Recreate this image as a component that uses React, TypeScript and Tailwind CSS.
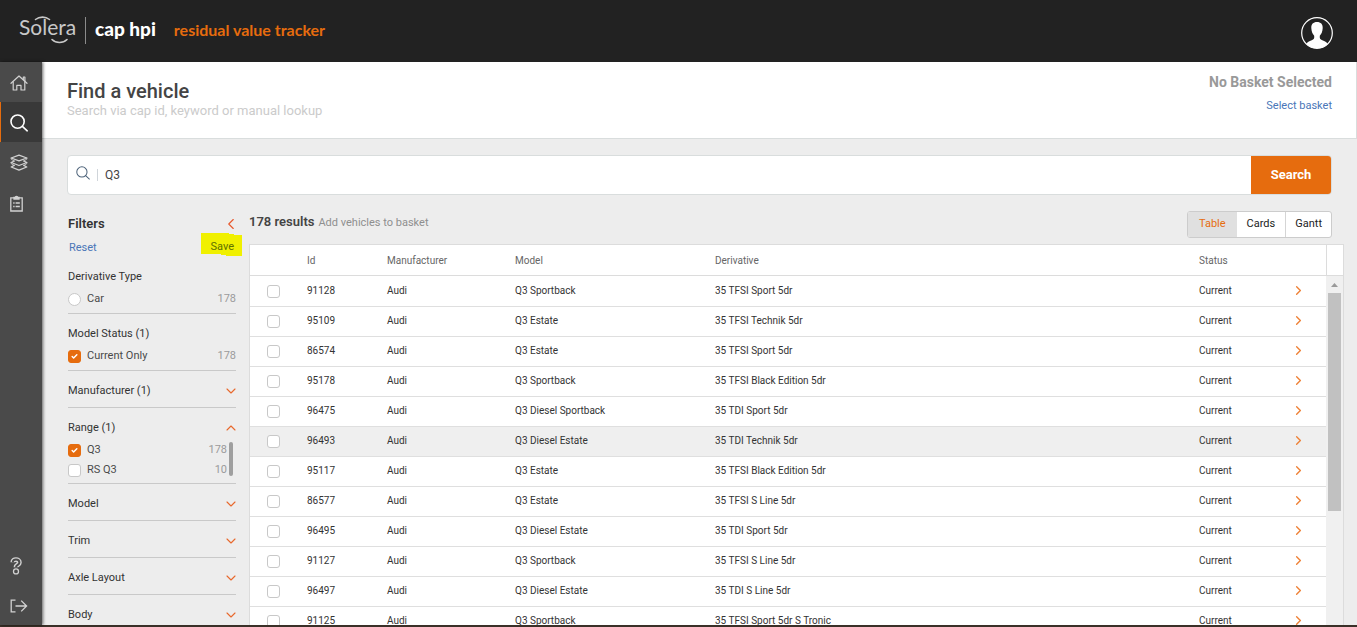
import React from 'react';
import { Check, ChevronDown, ChevronLeft, ChevronRight, ChevronUp } from 'lucide-react';

type Vehicle = { id: string; model: string; derivative: string; highlighted?: boolean };

const vehicles: Vehicle[] = [
  { id: '91128', model: 'Q3 Sportback', derivative: '35 TFSI Sport 5dr' },
  { id: '95109', model: 'Q3 Estate', derivative: '35 TFSI Technik 5dr' },
  { id: '86574', model: 'Q3 Estate', derivative: '35 TFSI Sport 5dr' },
  { id: '95178', model: 'Q3 Sportback', derivative: '35 TFSI Black Edition 5dr' },
  { id: '96475', model: 'Q3 Diesel Sportback', derivative: '35 TDI Sport 5dr' },
  { id: '96493', model: 'Q3 Diesel Estate', derivative: '35 TDI Technik 5dr', highlighted: true },
  { id: '95117', model: 'Q3 Estate', derivative: '35 TFSI Black Edition 5dr' },
  { id: '86577', model: 'Q3 Estate', derivative: '35 TFSI S Line 5dr' },
  { id: '96495', model: 'Q3 Diesel Estate', derivative: '35 TDI Sport 5dr' },
  { id: '91127', model: 'Q3 Sportback', derivative: '35 TFSI S Line 5dr' },
  { id: '96497', model: 'Q3 Diesel Estate', derivative: '35 TDI S Line 5dr' },
  { id: '91125', model: 'Q3 Sportback', derivative: '35 TFSI Sport 5dr S Tronic' },
];

function HomeIcon() {
  return (
    <svg width="18" height="16" viewBox="0 0 18 16" fill="none" stroke="currentColor" strokeWidth="1.2" strokeLinejoin="round" strokeLinecap="round" aria-hidden="true">
      <path d="M1 8.3 9 1l8 7.3" />
      <path d="M13.3 4.5V2h1.6v4" />
      <path d="M3.2 6.8V15h3.6v-4.6h4.2V15h3.8V6.8" />
    </svg>
  );
}

function SearchIcon({ size, strokeWidth }: { size: number; strokeWidth: number }) {
  return (
    <svg width={size} height={size} viewBox="0 0 18 18" fill="none" stroke="currentColor" strokeWidth={strokeWidth} strokeLinecap="round" aria-hidden="true">
      <circle cx="7.6" cy="7.6" r="6.6" />
      <path d="m12.4 12.4 4.8 4.4" />
    </svg>
  );
}

function LayersIcon() {
  return (
    <svg width="18" height="18" viewBox="0 0 18 18" fill="none" stroke="currentColor" strokeWidth="1.3" strokeLinejoin="round" strokeLinecap="round" aria-hidden="true">
      <path d="M9 1.2 16.8 4 9 6.800 1.200 4z" />
      <path d="M4.200 7 1.200 8.500 9 11.500l7.800-3L13.800 7" />
      <path d="M4.200 11.400 1.200 13 9 16.200 16.800 13l-3-1.600" />
      <path d="M1.200 4v1.200L4.200 7M16.800 4v1.200L13.800 7" strokeWidth="0.800" />
      <path d="M1.200 8.500v1.200l3 1.700M16.800 8.500v1.200l-3 1.700" strokeWidth="0.800" />
    </svg>
  );
}

function ClipboardIcon() {
  return (
    <svg width="13" height="17" viewBox="0 0 13 17" fill="none" stroke="currentColor" strokeWidth="1.3" aria-hidden="true">
      <path d="M.8 2.800h11.400V16H.8z" />
      <path d="M4 4V2.500h1.300a1.200 1.200 0 0 1 2.400 0H9V4z" fill="currentColor" />
      <path d="M3.200 8h1.400M5.600 8h4.200M3.200 11.500h1.400M5.600 11.500h4.200" />
    </svg>
  );
}

function HelpIcon() {
  const hook = 'M2.800 5.200C2.800 3.200 4.200 2.600 6 2.600s3.400.9 3.400 2.900c0 2.400-3.400 2.200-3.400 4.700';
  return (
    <svg width="12" height="18" viewBox="0 0 12 18" fill="none" strokeLinejoin="round" aria-hidden="true">
      <path d={hook} stroke="#d2d2d2" strokeWidth="4.800" />
      <circle cx="6" cy="14.400" r="2.500" fill="#4a4a4a" stroke="#d2d2d2" strokeWidth="1.300" />
      <path d={hook} stroke="#4a4a4a" strokeWidth="2" />
    </svg>
  );
}

function LogoutIcon() {
  return (
    <svg width="18" height="14" viewBox="0 0 18 14" fill="none" stroke="currentColor" strokeWidth="1.3" aria-hidden="true">
      <path d="M5.5 1.2H1.2v11.6h4.3" />
      <path d="M5.5 7h11M11.2 1.6 16.6 7l-5.4 5.4" />
    </svg>
  );
}

function NavButton({ label, active = false, children }: { label: string; active?: boolean; children: React.ReactNode }) {
  return (
    <button
      type="button"
      aria-label={label}
      className={`flex h-10 w-full items-center pt-0.5 pl-2.5 ${active ? 'bg-[#393939] text-white shadow-[inset_1px_0_0_#e66c0e]' : 'text-[#d2d2d2]'}`}
    >
      {children}
    </button>
  );
}

function TickBox({ id, label, type = 'checkbox', checked = false }: { id: string; label?: string; type?: 'checkbox' | 'radio'; checked?: boolean }) {
  return (
    <span className="grid size-[13px] shrink-0 place-items-center">
      <input
        id={id}
        type={type}
        aria-label={label}
        defaultChecked={checked}
        className={`col-start-1 row-start-1 size-[13px] appearance-none border border-[#c8c8c8] bg-white checked:border-[#e66c0e] checked:bg-[#e66c0e] ${type === 'radio' ? 'rounded-full' : 'rounded-[3px]'}`}
      />
      {checked && <Check size={7} strokeWidth={5} className="pointer-events-none col-start-1 row-start-1 text-white" />}
    </span>
  );
}

function Option({ id, label, count, type, checked, height = 'h-[22px]' }: { id: string; label: string; count: number; type?: 'checkbox' | 'radio'; checked?: boolean; height?: string }) {
  return (
    <div className={`flex ${height} items-center text-[11px]`}>
      <TickBox id={id} type={type} checked={checked} />
      <label htmlFor={id} className="ml-1.5 flex-1 pt-px text-[#4a4a4a]">{label}</label>
      <span className="pt-px text-[#9b9b9b]">{count}</span>
    </div>
  );
}

function Section({ title, toggle, children }: { title: string; toggle?: 'open' | 'closed'; children?: React.ReactNode }) {
  const heading = 'flex h-[22px] w-full items-center justify-between text-[11px] text-[#333]';
  return (
    <section className={`border-b border-[#c9c9c9] pt-[9px] ${children ? 'pb-[3px]' : 'pb-[5px]'}`}>
      {toggle ? (
        <button type="button" aria-expanded={toggle === 'open'} className={heading}>
          {title}
          {toggle === 'open' ? (
            <ChevronUp size={16} strokeWidth={1.7} className="-mr-[3px] text-[#e8682c]" />
          ) : (
            <ChevronDown size={16} strokeWidth={1.7} className="-mr-[3px] text-[#e8682c]" />
          )}
        </button>
      ) : (
        <h3 className={heading}>{title}</h3>
      )}
      {children}
    </section>
  );
}

function Header() {
  return (
    <header className="flex h-[62px] shrink-0 items-center justify-between bg-[#222] pr-6 pl-[19px]">
      <div className="flex items-center pb-0.5">
        <div className="relative h-7 w-[57px] font-['Lato'] text-[21px] leading-[22px] font-normal text-[#c8c8c8]">
          Solera
          <svg className="absolute top-0 left-0" width="58" height="30" viewBox="0 0 58 30" fill="none" stroke="#c8c8c8" strokeWidth="1.6" strokeLinecap="round" aria-hidden="true">
            <path d="M16.500 3.500c4-3.200 10-3.200 14 0" />
            <path d="M33 23.500c4 4 11 4 15 0" />
          </svg>
        </div>
        <span className="ml-[9px] h-[27px] w-px bg-[#8b8b8b]" />
        <span className="ml-[9px] pb-0.5 font-['Lato'] text-[19px] leading-6 font-black text-white">cap hpi</span>
        <span className="ml-[18px] font-['Lato'] text-[16px] leading-6 font-bold text-[#e66c0e]">residual value tracker</span>
      </div>
      <button type="button" aria-label="Account" className="mt-1">
        <svg width="32" height="32" viewBox="0 0 32 32" aria-hidden="true">
          <circle cx="16" cy="16" r="15.3" fill="#222" stroke="#fff" strokeWidth="1.2" />
          <path d="M16 5c3.800 0 5.900 2.300 5.700 6-.2 3.800-1.300 6-2.900 7.700-.3 2.600.3 3.600 2.500 4.600 2.600 1.100 4.300 1.900 5.600 3.600A15.300 15.300 0 0 1 16 31.300 15.300 15.300 0 0 1 5.100 26.900c1.300-1.700 3-2.500 5.600-3.600 2.200-1 2.800-2 2.500-4.600-1.600-1.700-2.700-3.900-2.900-7.700C10.100 7.300 12.200 5 16 5z" fill="#fff" />
        </svg>
      </button>
    </header>
  );
}

function Filters() {
  return (
    <aside className="w-[168px] shrink-0">
      <div className="flex h-[26px] items-center justify-between">
        <h2 className="text-[13px] font-semibold text-[#333]">Filters</h2>
        <button type="button" aria-label="Collapse filters">
          <ChevronLeft size={18} strokeWidth={1.5} className="-mr-1 text-[#e8582c]" />
        </button>
      </div>
      <div className="flex h-5 items-center justify-between text-[11px]">
        <a href="#reset" className="ml-px pt-0.5 text-[#4a76b8]">Reset</a>
        <a href="#save" className="relative mr-0.5 text-[#5f7000]">
          <svg className="absolute -top-1.5 -left-[9px]" width="41" height="24" viewBox="0 0 41 24" aria-hidden="true">
            <path d="M0 0h28v1h5v1h8v21H25v-1h-5v-1H0z" fill="#f0f000" />
          </svg>
          <span className="relative">Save</span>
        </a>
      </div>
      <Section title="Derivative Type">
        <Option id="type-car" type="radio" label="Car" count={178} />
      </Section>
      <Section title="Model Status (1)">
        <Option id="status-current" label="Current Only" count={178} checked />
      </Section>
      <Section title="Manufacturer (1)" toggle="closed" />
      <Section title="Range (1)" toggle="open">
        <div className="flex gap-0.5 pt-px pr-[3px]">
          <div className="flex-1">
            <Option id="range-q3" label="Q3" count={178} checked height="h-5" />
            <Option id="range-rsq3" label="RS Q3" count={10} height="h-5" />
          </div>
          <div className="mt-0.5 h-[34px] w-1 rounded-full bg-[#9f9f9f]" />
        </div>
      </Section>
      <Section title="Model" toggle="closed" />
      <Section title="Trim" toggle="closed" />
      <Section title="Axle Layout" toggle="closed" />
      <Section title="Body" toggle="closed" />
    </aside>
  );
}

function Results() {
  return (
    <section className="flex min-w-0 flex-1 flex-col">
      <div className="flex h-[33px] shrink-0 items-start justify-between pr-3">
        <p className="mt-px flex items-baseline gap-1 leading-5">
          <strong className="text-[13px] font-semibold text-[#444]">178 results</strong>
          <span className="text-[11px] text-[#8f8f8f]">Add vehicles to basket</span>
        </p>
        <div className="flex h-[27px] overflow-hidden rounded-[3px] border border-[#ccc] bg-white text-[11px] text-[#222]">
          <button type="button" className="bg-[#e0e0e0] px-[11px] text-[#e66c0e]">Table</button>
          <button type="button" className="px-2.5">Cards</button>
          <button type="button" className="border-l border-[#d5d5d5] px-[9px]">Gantt</button>
        </div>
      </div>
      <div className="flex min-h-0 flex-1 overflow-hidden border-x border-t border-[#dcdcdc] bg-white">
        <div className="min-w-0 flex-1">
          <table className="w-full table-fixed border-separate border-spacing-0 text-left text-[10px]">
            <colgroup>
              <col className="w-[57px]" />
              <col className="w-20" />
              <col className="w-32" />
              <col className="w-[200px]" />
              <col />
              <col className="w-24" />
              <col className="w-[31px]" />
            </colgroup>
            <thead>
              <tr className="h-[31px] text-[#666] *:border-b *:border-[#dcdcdc]">
                <td />
                <th className="font-normal">Id</th>
                <th className="font-normal">Manufacturer</th>
                <th className="font-normal">Model</th>
                <th className="font-normal">Derivative</th>
                <th className="font-normal">Status</th>
                <td />
              </tr>
            </thead>
            <tbody className="text-[#333]">
              {vehicles.map((v) => (
                <tr key={v.id} className={`h-[30px] *:border-b *:border-[#dfdfdf] first:h-[31px] ${v.highlighted ? 'bg-[#efefef]' : ''}`}>
                  <td className="pl-[17px]">
                    <TickBox id={`vehicle-${v.id}`} label={`Select vehicle ${v.id}`} />
                  </td>
                  <td className="pb-0.5">{v.id}</td>
                  <td className="pb-0.5">Audi</td>
                  <td className="pb-0.5">{v.model}</td>
                  <td className="pb-0.5">{v.derivative}</td>
                  <td className="pb-0.5">Current</td>
                  <td className="pb-0.5">
                    <button type="button" aria-label={`Open vehicle ${v.id}`} className="-ml-1 block">
                      <ChevronRight size={15} strokeWidth={2.2} className="text-[#ee8136]" />
                    </button>
                  </td>
                </tr>
              ))}
            </tbody>
          </table>
        </div>
        <div className="flex w-[17px] shrink-0 flex-col">
          <div className="h-[31px] shrink-0 border-b border-l border-[#dcdcdc]" />
          <div className="flex flex-1 flex-col items-center bg-[#f0f0f0]">
            <svg className="mt-[7px] mb-1.5 shrink-0" width="7" height="4" viewBox="0 0 7 4" aria-hidden="true">
              <path d="M0 4 3.500 0 7 4z" fill="#9a9a9a" />
            </svg>
            <div className="h-[218px] w-[13px] bg-[#c1c1c1]" />
          </div>
        </div>
      </div>
    </section>
  );
}

export default function App() {
  return (
    <div className="flex h-screen flex-col overflow-hidden bg-[#ededed] font-['Roboto',sans-serif]">
      <Header />
      <div className="flex min-h-0 flex-1">
        <nav className="z-10 flex w-[42px] shrink-0 flex-col justify-between bg-[#4a4a4a] shadow-[1px_0_3px_rgba(0,0,0,0.6)]">
          <div>
            <NavButton label="Home"><HomeIcon /></NavButton>
            <NavButton label="Search" active><SearchIcon size={18} strokeWidth={1.6} /></NavButton>
            <NavButton label="Baskets"><LayersIcon /></NavButton>
            <NavButton label="Reports"><ClipboardIcon /></NavButton>
          </div>
          <div>
            <NavButton label="Help"><HelpIcon /></NavButton>
            <NavButton label="Log out"><LogoutIcon /></NavButton>
          </div>
        </nav>
        <main className="flex min-w-0 flex-1 flex-col">
          <div className="flex h-[77px] shrink-0 justify-between border-r border-b border-[#d9dddd] bg-white pt-[18px] pr-6 pl-[25px]">
            <div>
              <h1 className="text-[20px] leading-[22px] font-medium text-[#444]">Find a vehicle</h1>
              <p className="text-[13px] leading-[18px] text-[#cbcbcb]">Search via cap id, keyword or manual lookup</p>
            </div>
            <div className="-mt-2 text-right">
              <p className="text-[14px] leading-5 font-bold text-[#999]">No Basket Selected</p>
              <a href="#basket" className="text-[11px] leading-5 text-[#4a76b8]">Select basket</a>
            </div>
          </div>
          <form className="mx-[25px] mt-4 flex h-10 shrink-0 overflow-hidden rounded-[4px] border border-[#d9dddd] bg-white" onSubmit={(e) => e.preventDefault()}>
            <label htmlFor="vehicle-search" className="flex items-center pb-1 pl-2 text-[#4b6178]" aria-label="Search vehicles">
              <SearchIcon size={14} strokeWidth={1.3} />
            </label>
            <span className="my-auto ml-[7px] h-3 w-px bg-[#d0d5da]" />
            <input id="vehicle-search" defaultValue="Q3" className="min-w-0 flex-1 px-[7px] text-[12px] text-[#444] outline-none" />
            <button type="submit" className="w-20 bg-[#e66c0e] text-[13px] font-bold text-white">Search</button>
          </form>
          <div className="mt-4 flex min-h-0 flex-1 gap-[13px] overflow-hidden pr-[13px] pl-[26px]">
            <Filters />
            <Results />
          </div>
        </main>
      </div>
      <div className="h-0.5 shrink-0 bg-[#3a3028]" />
    </div>
  );
}
